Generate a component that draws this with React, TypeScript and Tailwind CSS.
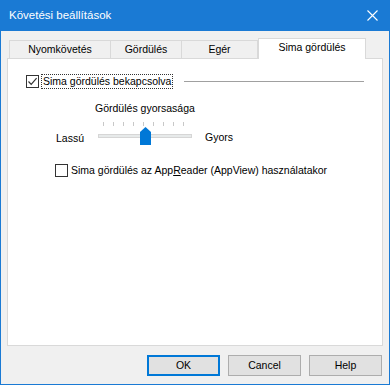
import React from 'react';

const font = { fontFamily: '"Liberation Sans", Arial, sans-serif' };

const tabs = ['Nyomkövetés', 'Gördülés', 'Egér', 'Sima gördülés'];
const tabWidths = ['w-[102px]', 'w-[71px]', 'w-[76px]', 'w-[108px]'];

function CheckBox({ checked }: { checked?: boolean }) {
  return (
    <div className="w-[13px] h-[13px] border border-[#333333] bg-white flex items-center justify-center shrink-0">
      {checked && (
        <svg width="11" height="11" viewBox="0 0 11 11">
          <path d="M1.5 5.5 L4.2 8.3 L9.6 2.2" fill="none" stroke="#333333" strokeWidth="1.2" />
        </svg>
      )}
    </div>
  );
}

function Slider() {
  const ticks = [8, 18, 28, 38, 48, 58, 68, 78, 88];
  return (
    <svg width="100" height="26" viewBox="0 0 100 26" className="block">
      {ticks.map((x) => (
        <line key={x} x1={x + 0.5} y1="2" x2={x + 0.5} y2="6" stroke="#c8c8c8" strokeWidth="1" />
      ))}
      <rect x="3.5" y="14.5" width="93" height="3" fill="#e7eaea" stroke="#d6d6d6" />
      <polygon points="45,12 50.5,7 56,12 56,25 45,25" fill="#0078d7" />
    </svg>
  );
}

export default function App() {
  return (
    <div
      className="w-[390px] h-[385px] bg-[#f0f0f0] border border-t-0 border-[#1a7ad4] flex flex-col text-[10.5px] leading-[13px] text-black"
      style={font}
    >
      {/* title bar */}
      <div className="h-[31px] -mx-px bg-[#1a7ad4] flex items-center justify-between pl-[9px] pr-[12px] shrink-0">
        <span className="text-white text-[11.5px]">Követési beállítások</span>
        <svg width="11" height="11" viewBox="0 0 11 11">
          <path d="M0.5 0.5 L10.5 10.5 M10.5 0.5 L0.5 10.5" stroke="white" strokeWidth="1.1" />
        </svg>
      </div>

      <div className="flex flex-col px-[6px] pt-[7px] flex-1">
        {/* tabs */}
        <div className="flex items-end h-[20px] pl-[2px] relative z-10">
          {tabs.map((t, i) => {
            const active = i === 3;
            return (
              <div
                key={t}
                className={`${tabWidths[i]} flex items-center justify-center border-[#d9d9d9] ${
                  active
                    ? 'h-[21px] bg-white border border-b-0 -mb-px pb-[3px]'
                    : `h-[18px] bg-[#f0f0f0] border-t border-r ${i === 0 ? 'border-l' : ''}`
                }`}
              >
                {t}
              </div>
            );
          })}
        </div>

        {/* panel */}
        <div className="h-[288px] bg-white border border-[#d9d9d9] flex flex-col">
          <div className="flex items-center pl-[18px] pt-[15px] pr-[18px]">
            <CheckBox checked />
            <span className="ml-[2px] px-[1px] h-[15px] leading-[13px] border border-dotted border-[#333333]">
              Sima gördülés bekapcsolva
            </span>
            <div className="flex-1 h-px bg-[#a0a0a0] ml-[11px]" />
          </div>

          <div className="flex items-end pl-[48px] mt-[13px]">
            <span className="mb-[1px]">Lassú</span>
            <div className="flex flex-col ml-[11px]">
              <span className="mb-[5px]">Gördülés gyorsasága</span>
              <Slider />
            </div>
            <span className="ml-[10px] mb-[2px]">Gyors</span>
          </div>

          <div className="flex items-center pl-[47px] mt-[18px]">
            <CheckBox />
            <span className="ml-[3px]">
              Sima gördülés az App<span className="underline">R</span>eader (AppView) használatakor
            </span>
          </div>
        </div>

        {/* buttons */}
        <div className="flex justify-end gap-[8px] mt-[9px] pr-[1px]">
          <button className="w-[73px] h-[21px] bg-[#e1e1e1] border-2 border-[#0078d7] flex items-center justify-center">
            OK
          </button>
          <button className="w-[73px] h-[21px] bg-[#e1e1e1] border border-[#adadad] flex items-center justify-center">
            Cancel
          </button>
          <button className="w-[73px] h-[21px] bg-[#e1e1e1] border border-[#adadad] flex items-center justify-center">
            Help
          </button>
        </div>
      </div>
    </div>
  );
}
